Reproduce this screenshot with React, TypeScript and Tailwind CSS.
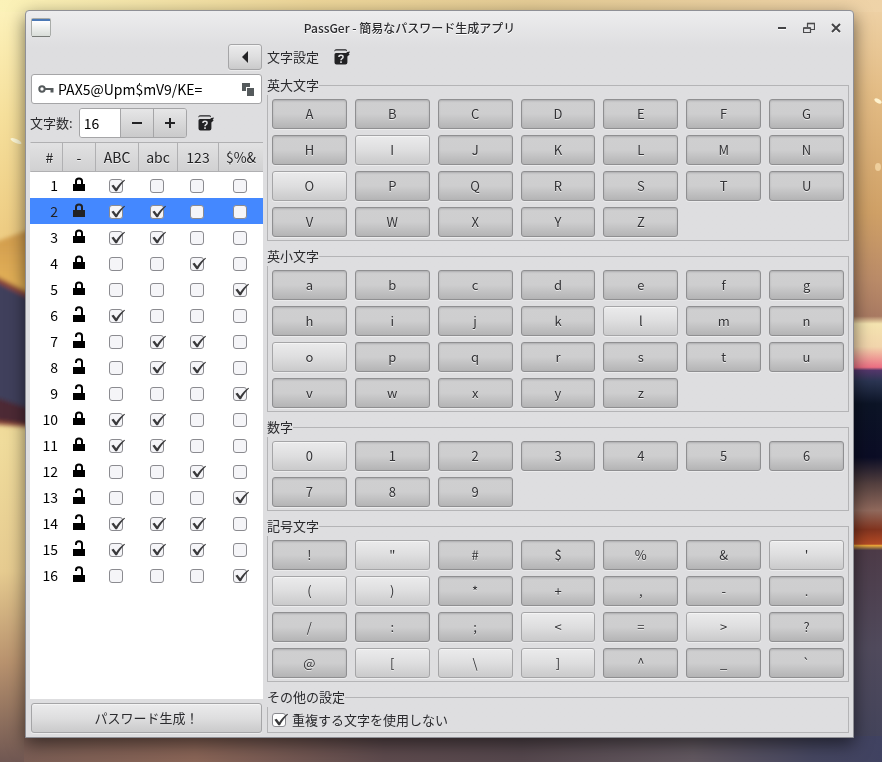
import { useState } from "react";

const FONT =
  "font-['Noto_Sans_CJK_JP',sans-serif] text-[13px] leading-5 text-[#2b2b2e]";

const RAISED =
  "rounded-[3px] border border-[#a5a5a7] bg-linear-to-b from-[#ebebec] via-[#dededf] to-[#cacacb] shadow-[inset_0_1px_0_#f4f4f4,0_1px_0_#ececed]";
const PRESSED =
  "rounded-[3px] border border-[#8f8f91] bg-linear-to-b from-[#cfcfd0] via-[#cececf] to-[#b4b4b5] shadow-[inset_0_1px_2px_#adadae,0_1px_0_#ebebec]";

type Group = { title: string; chars: string; off: string };

const GROUPS: Group[] = [
  { title: "英大文字", chars: "ABCDEFGHIJKLMNOPQRSTUVWXYZ", off: "IO" },
  { title: "英小文字", chars: "abcdefghijklmnopqrstuvwxyz", off: "lo" },
  { title: "数字", chars: "0123456789", off: "0" },
  { title: "記号文字", chars: "!\"#$%&'()*+,-./:;<=>?@[\\]^_`", off: "\"'()<>[\\]" },
];

// One entry per password position: locked flag, then ABC / abc / 123 / $%&.
const ROWS: [boolean, string][] = [
  [true, "1000"],
  [true, "1100"],
  [true, "1100"],
  [true, "0010"],
  [true, "0001"],
  [false, "1000"],
  [false, "0110"],
  [false, "0110"],
  [false, "0001"],
  [true, "1100"],
  [true, "1100"],
  [true, "0010"],
  [false, "0001"],
  [false, "1110"],
  [false, "1110"],
  [false, "0001"],
];

const KINDS = ["ABC", "abc", "123", "$%&"];

function Wallpaper() {
  return (
    <svg
      className="fixed inset-0 -z-10 h-full w-full"
      viewBox="0 0 882 762"
      preserveAspectRatio="none"
      aria-hidden="true"
    >
      <defs>
        <linearGradient id="leftSky" x1="0" y1="0" x2="0" y2="1">
          <stop offset="0" stopColor="#fdf3bd" />
          <stop offset=".15" stopColor="#f6e09c" />
          <stop offset=".3" stopColor="#eecd84" />
          <stop offset=".58" stopColor="#f0dc9c" />
          <stop offset=".75" stopColor="#e6cb90" />
          <stop offset=".87" stopColor="#b8926e" />
          <stop offset="1" stopColor="#705752" />
        </linearGradient>
        <linearGradient id="rightSky" x1="0" y1="0" x2="0" y2="1">
          <stop offset="0" stopColor="#efd3a8" />
          <stop offset=".12" stopColor="#e3bc85" />
          <stop offset=".28" stopColor="#cfa066" />
          <stop offset=".37" stopColor="#b98a68" />
          <stop offset=".415" stopColor="#a97a62" />
          <stop offset=".425" stopColor="#f4e4b0" />
          <stop offset=".455" stopColor="#f2d5ac" />
          <stop offset=".482" stopColor="#ec6f83" />
          <stop offset=".486" stopColor="#54376b" />
          <stop offset=".5" stopColor="#2b3552" />
          <stop offset=".53" stopColor="#0c1426" />
          <stop offset=".6" stopColor="#0b0d25" />
          <stop offset=".635" stopColor="#54403f" />
          <stop offset=".67" stopColor="#90695c" />
          <stop offset=".695" stopColor="#82341f" />
          <stop offset=".714" stopColor="#b34a25" />
          <stop offset=".716" stopColor="#e9a83a" />
          <stop offset=".722" stopColor="#4d3b48" />
          <stop offset=".85" stopColor="#504a5c" />
          <stop offset="1" stopColor="#40425a" />
        </linearGradient>
        <linearGradient id="topSky">
          <stop offset="0" stopColor="#fbf2b8" />
          <stop offset=".35" stopColor="#eed79a" />
          <stop offset=".6" stopColor="#e6cd96" />
          <stop offset="1" stopColor="#efd3a8" />
        </linearGradient>
        <linearGradient id="ground">
          <stop offset="0" stopColor="#7a5d54" />
          <stop offset=".2" stopColor="#8a6557" />
          <stop offset=".42" stopColor="#5d4a4d" />
          <stop offset=".58" stopColor="#55474d" />
          <stop offset=".78" stopColor="#625860" />
          <stop offset=".92" stopColor="#454660" />
          <stop offset="1" stopColor="#404261" />
        </linearGradient>
        <linearGradient id="petal" x1="0" y1="0" x2="0" y2="1">
          <stop offset="0" stopColor="#cf9a4d" />
          <stop offset="1" stopColor="#e9b75a" />
        </linearGradient>
        <filter id="soft" x="-20%" y="-20%" width="140%" height="140%">
          <feGaussianBlur stdDeviation="2" />
        </filter>
      </defs>
      <rect width="441" height="762" fill="url(#leftSky)" />
      <rect x="441" width="441" height="762" fill="url(#rightSky)" />
      <rect width="882" height="12" fill="url(#topSky)" />
      <rect x="24" y="736" width="858" height="26" fill="url(#ground)" />
      <g filter="url(#soft)">
        <path d="M-8 243 L40 226 V300 L-8 280Z" fill="url(#petal)" />
        <path d="M-8 274 L40 298 V428 L-8 424Z" fill="#8f4a3a" />
        <path d="M-8 280 L40 304 V424 L-8 412Z" fill="#3f3f5c" />
        <path d="M-8 396 L40 412 V426 L-8 420Z" fill="#4d2c35" />
      </g>
      <ellipse cx="16" cy="141" rx="6" ry="2" fill="#fffad9" transform="rotate(25 16 141)" />
      <ellipse cx="878" cy="101" rx="4" ry="2" fill="#fff3cf" transform="rotate(30 878 101)" />
      <ellipse cx="878" cy="167" rx="3" ry="4" fill="#efcf9c" />
    </svg>
  );
}

function CheckBox({ label, initial }: { label: string; initial: boolean }) {
  const [on, setOn] = useState(initial);
  return (
    <span className="relative block size-[14px]">
      <input
        type="checkbox"
        aria-label={label}
        checked={on}
        onChange={() => setOn(!on)}
        className="block size-[14px] appearance-none rounded-[3px] border border-[#8b8b90] bg-[#f5f5f8]"
      />
      {on && <Tick />}
    </span>
  );
}

function Tick() {
  return (
    <svg
      className="pointer-events-none absolute top-0 left-[2px] h-[14px] w-[14px]"
      viewBox="0 0 14 14"
      aria-hidden="true"
    >
      <path d="M.4 6.800 2.600 5.800 5.200 9.200C7.400 5.800 10.200 2.800 13.400 .800L14 1.400C10.800 4.200 8.200 8 6 12.200H4.400Z" fill="#3a3a3c" />
    </svg>
  );
}

function Lock({ locked }: { locked: boolean }) {
  return locked ? (
    <svg className="mx-auto -mt-[2px] h-[14px] w-3" viewBox="0 0 12 14" role="img" aria-label="locked">
      <path d="M3 7V4Q3 1.500 6 1.500T9 4V7" fill="none" stroke="currentColor" strokeWidth="2" />
      <path d="M0 7h12v7H0z" fill="currentColor" />
    </svg>
  ) : (
    <svg className="mx-auto -mt-[2px] h-4 w-3" viewBox="0 0 12 16" role="img" aria-label="unlocked">
      <path d="M3 5V4Q3 1.300 6 1.300T9 4V10" fill="none" stroke="currentColor" strokeWidth="2" />
      <path d="M0 9h12v7H0z" fill="currentColor" />
    </svg>
  );
}

function HelpButton({ label }: { label: string }) {
  return (
    <button type="button" aria-label={label} className="block">
      <svg className="size-4" viewBox="0 0 16 16" aria-hidden="true">
        <path d="M.5 2.800V1.200Q1 .2 2.600.2H11.500Q13 .2 13 1.700L12.500 2.200Q12.500 1.600 11.500 1.600H2Q1 1.600.5 2.800Z" fill="#222224" />
        <path d="M2 4H12.200Q12.600 2.400 16 2.400L15.200 4.200H14.600L15.600 5.400 13.400 7.600V13.500Q13.400 15.500 11.400 15.500H2.500Q.5 15.500.5 13.500V5.500Q.5 4 2 4Z" fill="#222224" />
        <path d="M4.900 8Q5 6.300 7 6.300T9.100 8Q9.100 9 8 9.600 7 10.200 7 11.200M7 12.300V13.900" fill="none" stroke="#e4e4e6" strokeWidth="1.500" />
      </svg>
    </button>
  );
}

function CharKey({ char, initial }: { char: string; initial: boolean }) {
  const [on, setOn] = useState(initial);
  return (
    <button
      type="button"
      aria-pressed={on}
      onClick={() => setOn(!on)}
      className={`h-[30px] text-[#333336] [text-shadow:0_1px_0_#ececec] ${on ? PRESSED : RAISED}`}
    >
      {char}
    </button>
  );
}

function CharGroup({ title, chars, off }: Group) {
  return (
    <fieldset className="min-w-0 border border-[#b4b4b6] px-1 pb-[3px]">
      <legend className="-ml-[5px]">{title}</legend>
      <div className="grid grid-cols-7 gap-x-2 gap-y-[6px] pt-1">
        {chars.split("").map((c) => (
          <CharKey key={c} char={c} initial={!off.includes(c)} />
        ))}
      </div>
    </fieldset>
  );
}

function TitleBar() {
  return (
    <header className="flex h-[33px] items-center pr-1 pl-[5px]">
      <svg className="h-[19px] w-5" viewBox="0 0 20 19" aria-hidden="true">
        <defs>
          <linearGradient id="pane" x1="0" y1="0" x2="0" y2="1">
            <stop offset="0" stopColor="#fff" />
            <stop offset="1" stopColor="#d9ddd9" />
          </linearGradient>
        </defs>
        <rect x=".5" y=".5" width="19" height="17.500" rx="1" fill="#eef0ee" stroke="#a9aca9" />
        <path d="M1 3h18v15H1z" fill="url(#pane)" />
        <path d="M1 1h18v2H1z" fill="#4a78b5" />
        <path d="M1 18.500h18" stroke="#777a77" />
      </svg>
      <h1 className="flex-1 text-center text-xs font-medium [text-shadow:0_1px_0_#fff]">
        PassGer - 簡易なパスワード生成アプリ
      </h1>
      <button type="button" aria-label="最小化" className="flex w-[27px] justify-center">
        <svg className="size-3" viewBox="0 0 12 12" aria-hidden="true">
          <path d="M2 6h8" stroke="#444446" strokeWidth="2" />
          <path d="M2 7.500h8" stroke="#fff" />
        </svg>
      </button>
      <button type="button" aria-label="元に戻す" className="flex w-[27px] justify-center">
        <svg className="size-3" viewBox="0 0 12 12" fill="none" stroke="#4a4a4c" aria-hidden="true">
          <path d="M4.500 5V1.500h7v6H8" strokeWidth="1.200" />
          <path d="M4 1.500h8" strokeWidth="1.600" />
          <path d="M.5 6h7v4.500h-7z" strokeWidth="1.200" />
          <path d="M.5 6h7" strokeWidth="1.600" />
        </svg>
      </button>
      <button type="button" aria-label="閉じる" className="flex w-[27px] justify-center">
        <svg className="size-3" viewBox="0 0 12 12" aria-hidden="true">
          <path d="M2 3l8 8M10 3l-8 8" stroke="#fff" strokeWidth="2" />
          <path d="M2 2l8 8M10 2l-8 8" stroke="#444446" strokeWidth="2" />
        </svg>
      </button>
    </header>
  );
}

function PasswordTable() {
  const head =
    "h-[30px] border-t border-b border-l border-[#b0b0b2] p-0 text-center font-normal [text-shadow:0_1px_0_#f0f0f0]";
  return (
    <div className="flex-1 bg-white">
      <table className="w-full table-fixed border-separate border-spacing-0 text-sm text-[#222224]">
        <colgroup>
          <col className="w-[32px]" />
          <col className="w-[33px]" />
          <col className="w-[43px]" />
          <col className="w-[39px]" />
          <col className="w-[41px]" />
          <col />
        </colgroup>
        <thead>
          <tr className="bg-linear-to-b from-[#e2e2e3] to-[#d0d0d1]">
            <th scope="col" className={`${head} border-l-transparent pl-[6px]`}>#</th>
            <th scope="col" className={head}>-</th>
            {KINDS.map((k) => (
              <th key={k} scope="col" className={head}>{k}</th>
            ))}
          </tr>
        </thead>
        <tbody>
          {ROWS.map(([locked, flags], i) => (
            <tr key={i} className={i === 1 ? "bg-[#4488ff]" : "text-black"}>
              <td className="h-[26px] p-0 pr-1 text-right">{i + 1}</td>
              <td className="p-0"><Lock locked={locked} /></td>
              {KINDS.map((k, j) => (
                <td key={k} className="p-0 pt-[2px] pr-[2px]">
                  <div className="flex justify-center">
                    <CheckBox label={`${i + 1} ${k}`} initial={flags[j] === "1"} />
                  </div>
                </td>
              ))}
            </tr>
          ))}
        </tbody>
      </table>
    </div>
  );
}

export default function App() {
  const [password, setPassword] = useState("PAX5@Upm$mV9/KE=");
  const [length, setLength] = useState(16);
  const [unique, setUnique] = useState(true);

  return (
    <div className={`isolate flex min-h-screen pt-[10px] pr-7 pb-6 pl-[25px] ${FONT}`}>
      <Wallpaper />
      <div className="flex flex-1 flex-col rounded-t-[4px] border border-[#8f9096] bg-[#dedee0] bg-linear-to-b from-[#ededee] to-[#dedee0] to-[36px] shadow-[0_6px_18px_rgba(0,0,0,0.55)]">
        <TitleBar />
        <main className="flex flex-1 gap-1 px-1 pb-1">
          <section className="flex w-[233px] flex-col">
            <div className="flex flex-col gap-1 px-px">
              <button
                type="button"
                aria-label="設定を閉じる"
                className={`flex h-[26px] w-[34px] items-center justify-center self-end ${RAISED}`}
              >
                <svg className="h-3 w-2" viewBox="0 0 8 12" aria-hidden="true">
                  <path d="M7 0v12L1 6z" fill="#222224" />
                </svg>
              </button>
              <div className="flex h-[30px] items-center rounded-[3px] border border-[#a5a5a7] bg-white pr-[6px] pl-[6px]">
                <svg className="h-2 w-4" viewBox="0 0 16 8" aria-hidden="true">
                  <circle cx="4" cy="4" r="2.700" fill="none" stroke="#555a5c" strokeWidth="2" />
                  <path d="M7 3h8.500v4.500h-3V5H7z" fill="#555a5c" />
                </svg>
                <input
                  type="text"
                  aria-label="パスワード"
                  value={password}
                  onChange={(e) => setPassword(e.target.value)}
                  className="ml-1 min-w-0 flex-1 bg-transparent text-sm text-black outline-none"
                />
                <button type="button" aria-label="コピー">
                  <svg className="h-[13px] w-[13px]" viewBox="0 0 13 13" fill="#555a5c" aria-hidden="true">
                    <path d="M0 0h8v4H4v4H0z" />
                    <path d="M5 5h4v3h3v5H5z" />
                    <path d="M9 5h3v3H9z" />
                  </svg>
                </button>
              </div>
              <div className="-ml-px flex items-center">
                <label htmlFor="length" className="mr-[6px]">文字数:</label>
                <div className="flex h-[30px] w-[108px] overflow-hidden rounded-[3px] border border-[#a5a5a7]">
                  <input
                    id="length"
                    type="text"
                    inputMode="numeric"
                    value={length}
                    onChange={(e) => setLength(Number(e.target.value) || 0)}
                    className="min-w-0 flex-1 bg-white pl-1 text-sm text-black outline-none"
                  />
                  <button
                    type="button"
                    aria-label="減らす"
                    onClick={() => setLength(length - 1)}
                    className="flex w-[33px] items-center justify-center border-l border-[#a5a5a7] bg-linear-to-b from-[#e6e6e7] to-[#cacacb]"
                  >
                    <svg className="size-[10px]" viewBox="0 0 10 10" aria-hidden="true">
                      <path d="M0 5h10" stroke="#222224" strokeWidth="2" />
                    </svg>
                  </button>
                  <button
                    type="button"
                    aria-label="増やす"
                    onClick={() => setLength(length + 1)}
                    className="flex w-[33px] items-center justify-center border-l border-[#a5a5a7] bg-linear-to-b from-[#e6e6e7] to-[#cacacb]"
                  >
                    <svg className="size-[10px]" viewBox="0 0 10 10" aria-hidden="true">
                      <path d="M0 5h10M5 0v10" stroke="#222224" strokeWidth="2" />
                    </svg>
                  </button>
                </div>
                <div className="ml-[11px]">
                  <HelpButton label="文字数のヘルプ" />
                </div>
              </div>
            </div>
            <div className="mt-1 flex flex-1 flex-col">
              <PasswordTable />
            </div>
            <div className="flex px-px pt-1">
              <button type="button" className={`h-[30px] flex-1 ${RAISED}`}>
                パスワード生成！
              </button>
            </div>
          </section>

          <section className="flex min-w-0 flex-1 flex-col gap-[5px]">
            <div className="flex h-[26px] items-center gap-[15px]">
              <h2>文字設定</h2>
              <HelpButton label="文字設定のヘルプ" />
            </div>
            {GROUPS.map((g) => (
              <CharGroup key={g.title} {...g} />
            ))}
            <fieldset className="min-w-0 border border-[#b4b4b6] px-1">
              <legend className="-ml-[5px]">その他の設定</legend>
              <label className="flex h-[25px] items-center gap-[6px]">
                <span className="relative block size-[14px]">
                  <input
                    type="checkbox"
                    checked={unique}
                    onChange={() => setUnique(!unique)}
                    className="block size-[14px] appearance-none rounded-[3px] border border-[#8b8b90] bg-white"
                  />
                  {unique && <Tick />}
                </span>
                重複する文字を使用しない
              </label>
            </fieldset>
          </section>
        </main>
      </div>
    </div>
  );
}
